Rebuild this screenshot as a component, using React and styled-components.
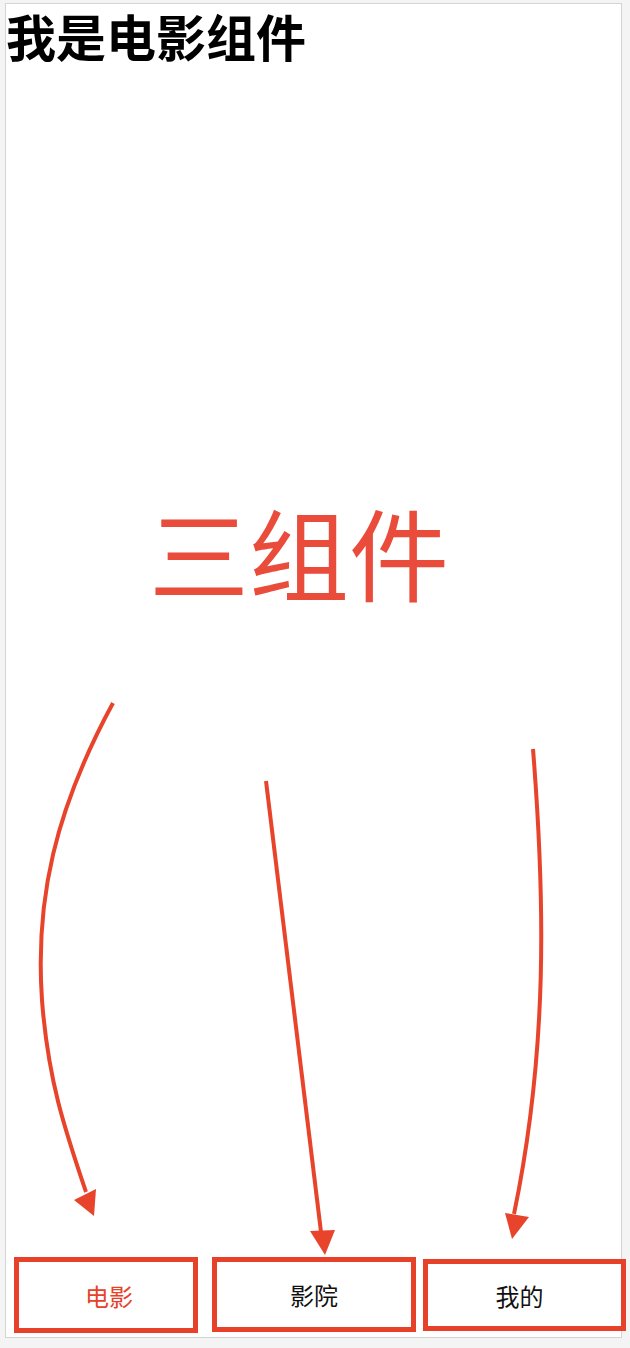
import React from 'react';
import styled, { createGlobalStyle } from 'styled-components';

const GlobalStyle = createGlobalStyle`
  html, body {
    margin: 0;
    padding: 0;
    background: #f4f4f4;
  }
  body {
    font-family: "Noto Sans CJK SC", "Noto Sans", sans-serif;
  }
`;

const Page = styled.div`
  position: relative;
  width: 630px;
  height: 1348px;
  overflow: hidden;
`;

const Frame = styled.div`
  position: relative;
  margin: 3px 0 0 5px;
  width: 617px;
  height: 1335px;
  box-sizing: border-box;
  border: 1px solid #d4d4d4;
  background: #fff;
  display: flex;
  flex-direction: column;
`;

const Title = styled.h1`
  margin: 0;
  padding: 6px 0 0 0;
  font-size: 50px;
  line-height: 50px;
  font-weight: 700;
  color: #000;
`;

const Stage = styled.div`
  flex: 1;
  padding-left: 143px;
`;

const Caption = styled.div`
  margin-top: 441px;
  font-size: 100px;
  line-height: 100px;
  font-weight: 400;
  color: #ea4c3c;
`;

const TabBar = styled.nav`
  height: 80px;
  display: flex;
  align-items: flex-start;
  padding-left: 8px;
`;

const Tab = styled.div`
  flex-shrink: 0;
  box-sizing: border-box;
  width: ${(p) => p.$w}px;
  height: ${(p) => p.$h}px;
  margin-left: ${(p) => p.$ml || 0}px;
  margin-top: ${(p) => p.$mt || 0}px;
  padding-left: ${(p) => (p.$shift > 0 ? p.$shift : 0)}px;
  padding-right: ${(p) => (p.$shift < 0 ? -p.$shift : 0)}px;
  border: 5px solid #e8412a;
  display: flex;
  align-items: center;
  justify-content: center;
  font-size: 24px;
  color: ${(p) => (p.$active ? '#e8412a' : '#111')};
`;

const Overlay = styled.svg`
  position: absolute;
  left: 0;
  top: 0;
  width: 630px;
  height: 1348px;
  pointer-events: none;
`;

const tabs = [
  { label: '电影', w: 184, h: 76, ml: 0, mt: 0, shift: 6, active: true },
  { label: '影院', w: 204, h: 75, ml: 14, mt: 0, shift: 0 },
  { label: '我的', w: 203, h: 72, ml: 7, mt: 2, shift: -10 },
];

const RED = '#e8442b';

const Arrows = () => (
  <Overlay viewBox="0 0 630 1348">
    <g fill="none" stroke={RED} strokeWidth="4" strokeLinecap="butt">
      <path d="M113 703 C 55 810, 35 900, 42 1000 C 48 1080, 65 1130, 86 1192" />
      <path d="M266 781 L 321 1232" />
      <path d="M533 749 C 545 900, 548 1050, 514 1214" />
    </g>
    <g fill={RED}>
      <polygon points="74,1200 96,1189 94,1216" />
      <polygon points="310,1231 335,1230 325,1255" />
      <polygon points="505,1213 529,1217 512,1239" />
    </g>
  </Overlay>
);

export default function App() {
  return (
    <Page>
      <GlobalStyle />
      <Frame>
        <Title>我是电影组件</Title>
        <Stage>
          <Caption>三组件</Caption>
        </Stage>
        <TabBar>
          {tabs.map((t) => (
            <Tab
              key={t.label}
              $w={t.w}
              $h={t.h}
              $ml={t.ml}
              $mt={t.mt}
              $shift={t.shift}
              $active={t.active}
            >
              {t.label}
            </Tab>
          ))}
        </TabBar>
      </Frame>
      <Arrows />
    </Page>
  );
}
